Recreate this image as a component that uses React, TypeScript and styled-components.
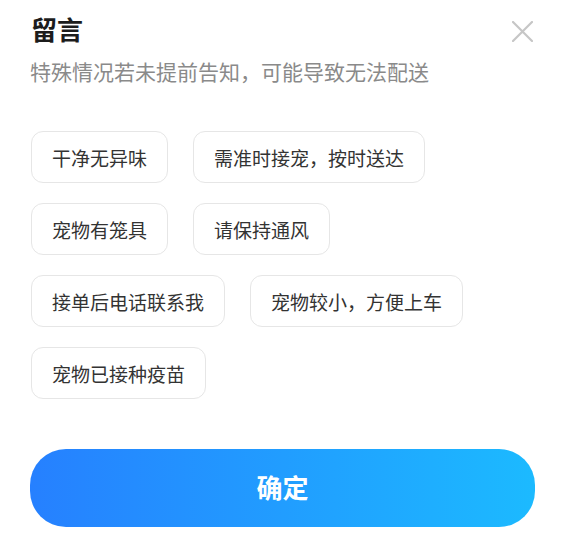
import React from "react";
import styled, { createGlobalStyle } from "styled-components";

const GlobalStyle = createGlobalStyle`
  html, body {
    margin: 0;
    padding: 0;
    background: #ffffff;
  }
  body {
    font-family: "Noto Sans CJK SC", "Noto Sans", sans-serif;
  }
  * { box-sizing: border-box; }
`;

const Sheet = styled.div`
  width: 565px;
  height: 539px;
  padding: 16px 30px 0 30px;
  background: #fff;
  display: flex;
  flex-direction: column;
`;

const Header = styled.div`
  display: flex;
  justify-content: space-between;
  align-items: flex-start;
`;

const Title = styled.h1`
  margin: 0 0 0 1px;
  font-size: 26px;
  line-height: 26px;
  font-weight: 700;
  color: #1c1c1c;
`;

const CloseButton = styled.button`
  border: none;
  background: transparent;
  padding: 0;
  margin: 5px 2px 0 0;
  width: 21px;
  height: 21px;
  display: flex;
  cursor: pointer;
`;

const Subtitle = styled.p`
  margin: 19px 0 0 0;
  font-size: 21px;
  line-height: 21px;
  color: #8a8a8a;
`;

const ChipList = styled.div`
  margin-top: 49px;
  padding-left: 1px;
  display: flex;
  flex-wrap: wrap;
  gap: 20px 25px;
`;

const Chip = styled.button`
  height: 52px;
  padding: 0 20px;
  border: 1px solid #e6e6e6;
  border-radius: 12px;
  background: #fff;
  font-family: "Noto Sans CJK SC", "Noto Sans", sans-serif;
  font-size: 19px;
  line-height: 19px;
  color: #333333;
  display: flex;
  align-items: center;
  cursor: pointer;
`;

const ConfirmButton = styled.button`
  margin-top: 50px;
  width: 505px;
  height: 78px;
  padding: 0 0 4px 0;
  border: none;
  border-radius: 36px;
  background: linear-gradient(90deg, #2680ff 0%, #1cbaff 100%);
  color: #ffffff;
  font-family: "Noto Sans CJK SC", "Noto Sans", sans-serif;
  font-size: 26px;
  font-weight: 700;
  display: flex;
  align-items: center;
  justify-content: center;
  cursor: pointer;
`;

const tags = [
  "干净无异味",
  "需准时接宠，按时送达",
  "宠物有笼具",
  "请保持通风",
  "接单后电话联系我",
  "宠物较小，方便上车",
  "宠物已接种疫苗",
];

export default function App() {
  return (
    <>
      <GlobalStyle />
      <Sheet>
        <Header>
          <Title>留言</Title>
          <CloseButton aria-label="关闭">
            <svg width="21" height="21" viewBox="0 0 21 21">
              <path
                d="M1 1 L20 20 M20 1 L1 20"
                stroke="#c6c6c6"
                strokeWidth="2.2"
                strokeLinecap="round"
              />
            </svg>
          </CloseButton>
        </Header>
        <Subtitle>特殊情况若未提前告知，可能导致无法配送</Subtitle>
        <ChipList>
          {tags.map((t) => (
            <Chip key={t}>{t}</Chip>
          ))}
        </ChipList>
        <ConfirmButton>确定</ConfirmButton>
      </Sheet>
    </>
  );
}
